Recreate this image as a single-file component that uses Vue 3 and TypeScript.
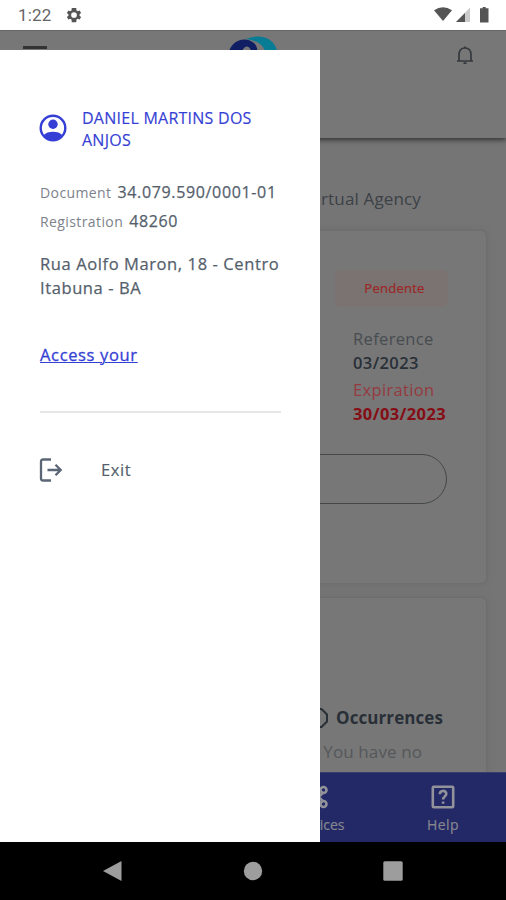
<script setup lang="ts">
interface Bill {
  status: string
  reference: string
  expiration: string
}

const customer = {
  name: 'DANIEL MARTINS DOS ANJOS',
  document: '34.079.590/0001-01',
  registration: '48260',
  street: 'Rua Aolfo Maron, 18 - Centro',
  city: 'Itabuna - BA',
}

const bill: Bill = {
  status: 'Pendente',
  reference: '03/2023',
  expiration: '30/03/2023',
}
</script>

<template>
  <div class="phone">
    <div class="status">
      <span class="clock">1:22</span>
      <svg class="gear" viewBox="0 0 24 24" width="18" height="18">
        <path fill-rule="evenodd" d="M19.4 13a7.5 7.5 0 0 0 0-2l2.1-1.6-2-3.5-2.5 1a7.7 7.7 0 0 0-1.7-1L15 2.500H9L8.700 5.900a7.700 7.700 0 0 0-1.700 1l-2.500-1-2 3.500L4.600 11a7.500 7.500 0 0 0 0 2l-2.100 1.600 2 3.500 2.500-1a7.700 7.700 0 0 0 1.700 1l.3 3.400h6l.3-3.400a7.700 7.700 0 0 0 1.700-1l2.500 1 2-3.500zM12 8.200a3.800 3.800 0 1 1 0 7.600 3.800 3.800 0 0 1 0-7.600z" />
      </svg>
      <svg class="system" viewBox="0 0 56 18" width="56" height="18">
        <path d="M0 4.200Q9-1.800 18 4.200L9 15z" />
        <path class="weak" d="M36 1.500V16H22z" />
        <path d="M31 7V16H22z" />
        <path d="M48.700 1h3v1.200H54.500V16.500h-8.500V2.200h2.700z" />
      </svg>
    </div>

    <div class="screen">
      <header class="topbar">
        <span class="menu"></span>
        <svg class="logo" viewBox="0 0 52 40" width="52" height="40">
          <path class="cyan" d="M17 4C34-2 49 3 50 22H37C39 12 30 5 17 4z" />
          <path class="navy" d="M0 22C1 6 16 0 26 8C30 12 30 17 28 22H24C24 8 14 8 13 22z" />
        </svg>
        <svg class="bell" viewBox="0 0 18 20" width="18" height="20">
          <path d="M1 15h16M3 15V9Q3 2 9 2t6 7v6" />
          <path d="M9 .5V2M7.500 17.200h3" />
        </svg>
      </header>

      <main class="content">
        <h1 class="title">Virtual Agency</h1>
        <section class="card bill">
          <span class="badge">{{ bill.status }}</span>
          <dl class="facts">
            <dt>Reference</dt>
            <dd>{{ bill.reference }}</dd>
            <dt class="due">Expiration</dt>
            <dd class="due strong">{{ bill.expiration }}</dd>
          </dl>
          <div class="pill"></div>
        </section>
        <section class="card events">
          <div class="heading">
            <svg viewBox="0 0 20 20" width="20" height="20"><path d="M6.500 1h7L19 6.500v7L13.500 19h-7L1 13.500v-7z" /></svg>
            <h2>Occurrences</h2>
          </div>
          <p>You have no</p>
        </section>
      </main>

      <nav class="tabs">
        <a class="tab services">
          <svg viewBox="0 0 24 24" width="24" height="24">
            <path d="M4 21L17.500 7M4 3l13.500 14" /><circle cx="17.500" cy="5" r="3" /><circle cx="17.500" cy="19" r="3" />
          </svg>
          <span>Services</span>
        </a>
        <a class="tab help">
          <svg viewBox="0 0 24 24" width="24" height="24">
            <rect x="1.800" y="1.800" width="20.400" height="20.400" rx="1" />
            <path d="M8.800 9.200C8.800 4.800 15.300 5 15.300 8.800c0 2.400-3.200 2.900-3.200 5.700M12.100 16.400v2.300" />
          </svg>
          <span>Help</span>
        </a>
      </nav>

      <aside class="drawer">
        <div class="profile">
          <svg viewBox="0 0 28 28" width="28" height="28">
            <circle class="ring" cx="14" cy="14" r="12.300" />
            <circle cx="14" cy="10.200" r="4.700" />
            <path d="M4.800 21C8 16.500 20 16.500 23.200 21C19 27.500 9 27.500 4.800 21z" />
          </svg>
          <span>{{ customer.name }}</span>
        </div>
        <div class="field document"><span>Document</span><b>{{ customer.document }}</b></div>
        <div class="field registration"><span>Registration</span><b>{{ customer.registration }}</b></div>
        <address><span class="street">{{ customer.street }}</span><span>{{ customer.city }}</span></address>
        <a class="access">Access your</a>
        <hr />
        <a class="exit">
          <svg viewBox="0 0 24 24" width="24" height="24">
            <path d="M11 1.500H3Q1 1.500 1 3.500v17q0 2 2 2h8" />
            <path d="M7.500 12h13M15.500 6.800L20.700 12l-5.200 5.200" />
          </svg>
          <span>Exit</span>
        </a>
      </aside>
    </div>

    <div class="keys">
      <svg viewBox="0 0 20 22" width="20" height="22"><path d="M0 11L18.500 1v20z" /></svg>
      <svg viewBox="0 0 20 20" width="20" height="20"><circle cx="10" cy="10" r="9.200" /></svg>
      <svg viewBox="0 0 20 20" width="20" height="20"><rect x=".3" y=".3" width="19.400" height="19.400" rx="1.500" /></svg>
    </div>
  </div>
</template>

<style>
body {
  margin: 0;
}
</style>

<style scoped>
.phone {
  width: 506px;
  height: 900px;
  display: flex;
  flex-direction: column;
  overflow: hidden;
  background: #fff;
  color: #555f6c;
  font: 16px/24px 'Open Sans', sans-serif;
}
.phone * {
  box-sizing: border-box;
}
svg {
  display: block;
  flex: none;
  overflow: visible;
}
.status {
  height: 30px;
  flex: none;
  display: flex;
  align-items: center;
  padding: 0 16px 0 18px;
}
.clock {
  width: 47px;
  color: #666;
  font: 17px/30px Roboto, sans-serif;
  letter-spacing: 0.2px;
}
.gear,
.system {
  fill: #555;
}
.system {
  margin-left: auto;
}
.weak {
  fill: #ccc;
}
.screen {
  position: relative;
  height: 812px;
  flex: none;
  display: flex;
  flex-direction: column;
  overflow: hidden;
  background: #757575;
}
.topbar {
  height: 108px;
  flex: none;
  display: flex;
  justify-content: space-between;
  align-items: flex-start;
  padding: 0 32px 0 23px;
  background: #777;
  border-top: 1px solid #666;
  box-shadow: 0 2px 5px #333;
}
.menu {
  width: 24px;
  height: 3px;
  margin-top: 15px;
  background: #333;
}
.logo {
  margin: 4px 0 0 4px;
}
.cyan {
  fill: #087c94;
}
.navy {
  fill: #101f64;
}
.bell {
  margin-top: 15px;
  fill: none;
  stroke: #34393e;
  stroke-width: 1.7;
}
.content {
  flex: 1;
  min-height: 0;
  overflow: hidden;
  padding: 48px 19px 0;
}
.title {
  margin: 0 66px 18px 0;
  color: #3c4147;
  font-size: 17px;
  font-weight: 400;
  line-height: 26px;
  letter-spacing: 0.15px;
  text-align: right;
}
.card {
  background: #777;
  border: 1px solid #6e6e6e;
  border-radius: 6px;
  box-shadow: 0 0 6px #6c6c6c;
}
.bill {
  height: 354px;
  display: flex;
  flex-direction: column;
  align-items: flex-end;
  padding: 39px 38px 0;
}
.badge {
  width: 113px;
  height: 37px;
  border-radius: 6px;
  background: #7b7371;
  color: #9c2626;
  font-size: 13px;
  line-height: 37px;
  letter-spacing: 0.25px;
  padding-left: 6px;
  text-align: center;
  -webkit-text-stroke: 0.2px;
}
.facts {
  width: 95px;
  margin: 20px 0 0;
}
.facts dt {
  color: #474c51;
  font-size: 16.5px;
  line-height: 24px;
  letter-spacing: 0.35px;
}
.facts dd {
  margin: 0 0 4px;
  color: #292f37;
  font-size: 16.5px;
  font-weight: 600;
  line-height: 23px;
  letter-spacing: 0.4px;
  white-space: nowrap;
}
.facts dt.due {
  color: #963a40;
}
.facts .strong {
  color: #850d15;
  font-weight: 700;
}
.pill {
  width: 280px;
  height: 50px;
  margin: 25px 1px 0 0;
  border: 1.5px solid #444849;
  border-radius: 25px;
}
.events {
  height: 240px;
  margin-top: 13px;
  padding: 107px 43px 0 0;
}
.heading {
  display: flex;
  justify-content: flex-end;
  align-items: center;
  gap: 8px;
}
.heading svg {
  fill: none;
  stroke: #292f37;
  stroke-width: 2;
}
.heading h2 {
  margin: 0;
  color: #292f37;
  font-size: 17px;
  font-weight: 700;
  line-height: 26px;
  letter-spacing: 0.08px;
}
.events p {
  margin: 8px 21px 0 0;
  color: #55585b;
  font-size: 17px;
  line-height: 26px;
  letter-spacing: 0.1px;
  text-align: right;
}
.tabs {
  height: 70px;
  flex: none;
  display: flex;
  justify-content: flex-end;
  background: #232966;
  border-top: 1px solid #3a3e6c;
  color: #85868f;
  font-size: 14px;
  -webkit-text-stroke: 0.2px;
}
.tab {
  width: 126px;
  display: flex;
  flex-direction: column;
  align-items: center;
  padding-top: 12px;
}
.services {
  padding-left: 2px;
}
.tab svg {
  fill: none;
  stroke: #92929a;
  stroke-width: 2.6;
}
.tab span {
  margin-top: 5px;
  line-height: 22px;
}
.help span {
  letter-spacing: 0.4px;
}
.drawer {
  position: absolute;
  top: 20px;
  left: 0;
  width: 320px;
  height: 792px;
  padding: 57px 39px 0 40px;
  background: #fff;
}
.profile {
  display: flex;
  align-items: center;
  gap: 15px;
  color: #353fd5;
  line-height: 22px;
  letter-spacing: 0.25px;
  -webkit-text-stroke: 0.15px;
}
.profile span {
  width: 190px;
}
.profile svg {
  margin: -2px 0 0 -1px;
  fill: #353fd5;
}
.profile .ring {
  fill: none;
  stroke: #353fd5;
  stroke-width: 2.4;
}
.field {
  display: flex;
  align-items: baseline;
  gap: 6px;
  line-height: 28px;
  white-space: nowrap;
}
.field span {
  color: #7c828b;
  font-size: 14px;
  letter-spacing: 0.4px;
}
.field b {
  font-weight: 400;
  letter-spacing: 0.65px;
  -webkit-text-stroke: 0.25px;
}
.document {
  margin-top: 27px;
}
address {
  display: flex;
  flex-direction: column;
  margin-top: 16px;
  font-size: 16.5px;
  font-style: normal;
  letter-spacing: 0.6px;
  line-height: 24px;
  white-space: nowrap;
  -webkit-text-stroke: 0.25px;
}
.access {
  display: block;
  width: max-content;
  margin-top: 43px;
  color: #353fd5;
  font-size: 16.5px;
  letter-spacing: 0.65px;
  text-decoration: underline;
  text-decoration-thickness: 1px;
  -webkit-text-stroke: 0.3px;
}
hr {
  height: 2px;
  margin: 44px 0 45px;
  border: 0;
  background: #e6e7e7;
}
.exit {
  display: flex;
  align-items: center;
  gap: 37px;
  font-size: 16.5px;
  letter-spacing: 0.6px;
  -webkit-text-stroke: 0.15px;
}
.exit svg {
  fill: none;
  stroke: #5a6675;
  stroke-width: 2.3;
}
.keys {
  height: 58px;
  flex: none;
  display: flex;
  align-items: center;
  justify-content: space-between;
  padding: 0 103px;
  background: #000;
}
.keys svg {
  fill: #9d9d9d;
}
</style>
